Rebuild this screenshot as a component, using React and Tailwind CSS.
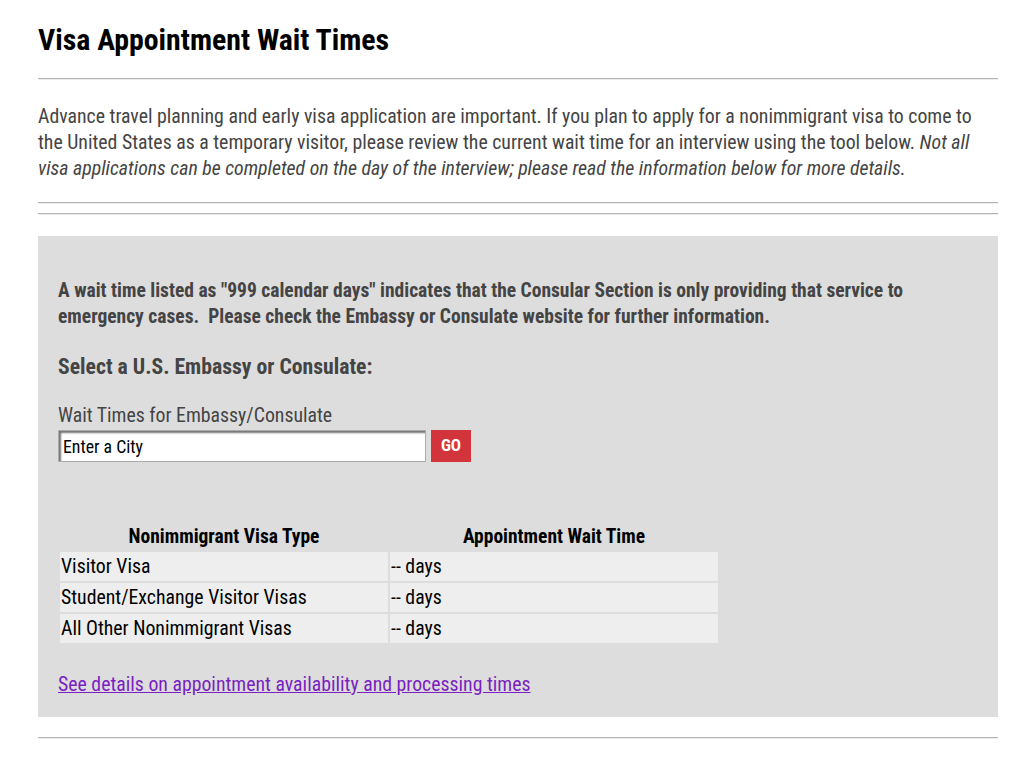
import React from 'react';

const rows = [
  { type: 'Visitor Visa', wait: '-- days' },
  { type: 'Student/Exchange Visitor Visas', wait: '-- days' },
  { type: 'All Other Nonimmigrant Visas', wait: '-- days' },
];

const Rule = ({ className = '' }) => (
  <div className={`h-[2px] border-t border-t-[#b4b4b4] border-b border-b-[#ececec] ${className}`} />
);

export default function App() {
  return (
    <div className="min-h-[766px] bg-white pl-[38px] pr-[26px] pt-[22px] font-['Roboto_Condensed','Roboto',sans-serif] text-[#444]">
      <h1 className="text-[29.8px] font-bold leading-[36px] text-black">Visa Appointment Wait Times</h1>
      <Rule className="mt-[20px]" />

      <p className="mt-[24px] text-[19.8px] leading-[26px]">
        Advance travel planning and early visa application are important. If you plan to apply for a nonimmigrant visa to come to
        the United States as a temporary visitor, please review the current wait time for an interview using the tool below.{' '}
        <em>Not all visa applications can be completed on the day of the interview; please read the information below for more details.</em>
      </p>
      <Rule className="mt-[20px]" />
      <Rule className="mt-[9px]" />

      <div className="mt-[21px] bg-[#dddddd] px-[20px] pt-[42px] pb-[19px]">
        <p className="text-[19.5px] font-bold leading-[26px]">
          A wait time listed as "999 calendar days" indicates that the Consular Section is only providing that service to
          <br />
          emergency cases.&nbsp; Please check the Embassy or Consulate website for further information.
        </p>
        <h2 className="mt-[23px] text-[21.7px] font-bold leading-[28px]">Select a U.S. Embassy or Consulate:</h2>

        <label className="mt-[24px] block text-[19.8px] leading-[22px]">Wait Times for Embassy/Consulate</label>
        <div className="mt-[3px] flex items-center gap-[5px]">
          <input
            type="text"
            defaultValue="Enter a City"
            className="h-[32px] w-[368px] bg-white px-[4px] text-[17.8px] text-black border border-[#aaa] shadow-[inset_2px_2px_2px_rgba(0,0,0,0.55)] outline-none"
          />
          <button className="h-[32px] w-[40px] bg-[#d1343a] text-[17px] font-bold text-white">GO</button>
        </div>

        <table className="mt-[61px] border-separate border-spacing-[2px] text-[19.8px] text-black">
          <thead>
            <tr>
              <th className="w-[328px] pb-[1px] text-center text-[19.5px] font-bold leading-[24px]">Nonimmigrant Visa Type</th>
              <th className="w-[328px] pb-[1px] text-center text-[19.5px] font-bold leading-[24px]">Appointment Wait Time</th>
            </tr>
          </thead>
          <tbody>
            {rows.map((r) => (
              <tr key={r.type}>
                <td className="h-[29px] bg-[#eeeeee] px-[1px] leading-[29px]">{r.type}</td>
                <td className="h-[29px] bg-[#eeeeee] px-[1px] leading-[29px]">{r.wait}</td>
              </tr>
            ))}
          </tbody>
        </table>

        <a href="#" className="mt-[27px] inline-block text-[19.8px] leading-[26px] text-[#7a1fc0] underline">
          See details on appointment availability and processing times
        </a>
      </div>
      <Rule className="mt-[20px]" />
    </div>
  );
}
